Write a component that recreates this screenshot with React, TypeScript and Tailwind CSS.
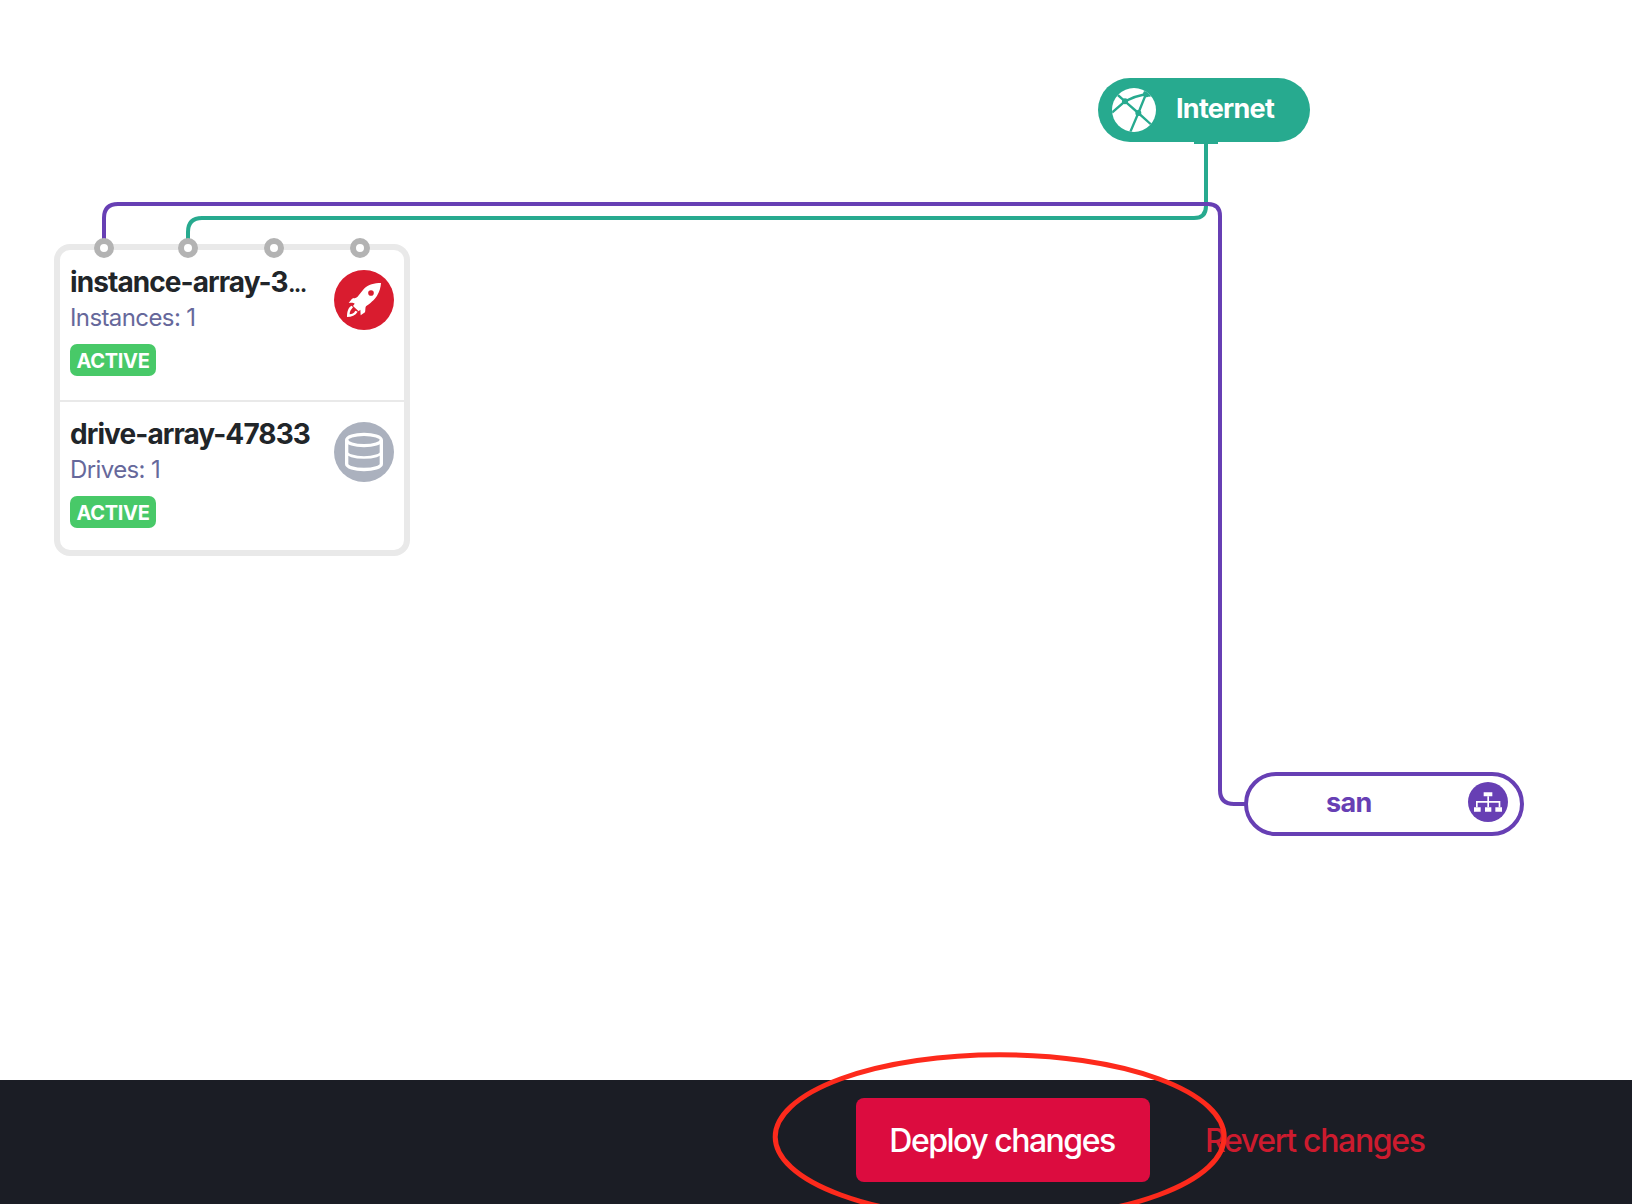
import React from "react";

const ports = ["left-[34px]", "left-[118px]", "left-[204px]", "left-[290px]"];

function RocketIcon() {
  return (
    <svg viewBox="27 30 180 180" className="size-[60px] shrink-0">
      <circle cx="117" cy="120" r="90" fill="#d91c2f" />
      <path
        d="M168 69C148 69 130 74 117 86L97 111C92 116 86 114 81 116L71 129C79 127 86 128 89 131L84 138L101 154L106 149L107 166L120 157C122 151 120 144 123 139C134 131 149 119 156 107C164 95 167 82 168 69Z"
        fill="#fff"
      />
      <circle cx="138" cy="99" r="8.5" fill="#d91c2f" />
      <path
        d="M80 137C69 143 66 155 66 171C80 171 91 166 98 155L91 152C87 160 80 162 74 163C74 155 78 149 84 142Z"
        fill="#fff"
      />
    </svg>
  );
}

function DatabaseIcon() {
  return (
    <svg viewBox="27 30 180 180" className="size-[60px] shrink-0">
      <circle cx="117" cy="120" r="90" fill="#abb1be" />
      <g fill="none" stroke="#fff" strokeWidth="10">
        <ellipse cx="117" cy="84" rx="52" ry="17" />
        <path d="M65 84V156C65 165 88 172.500 117 172.500S169 165 169 156V84" />
        <path d="M65 120C65 129 88 136.500 117 136.500S169 129 169 120" strokeWidth="8" />
      </g>
    </svg>
  );
}

function GlobeIcon() {
  return (
    <svg viewBox="96 84 132 132" className="size-[44px]">
      <defs>
        <clipPath id="globe">
          <circle cx="162" cy="150" r="66" />
        </clipPath>
      </defs>
      <circle cx="162" cy="150" r="66" fill="#fff" />
      <g clipPath="url(#globe)" stroke="#27aa8f" strokeWidth="7" fill="none">
        <path d="M110 102L135 124L175 159L215 195M96 158L135 124Q166 108 198 102L175 159L150 218M198 102L212 108" />
        <g fill="#27aa8f" stroke="none">
          <circle cx="135" cy="124" r="9" />
          <circle cx="175" cy="159" r="9" />
          <circle cx="199" cy="102" r="10" />
        </g>
      </g>
    </svg>
  );
}

function NetworkIcon() {
  return (
    <svg viewBox="54 36 120 120" className="size-[40px]">
      <circle cx="114" cy="96" r="60" fill="#673fb4" />
      <g fill="#fff">
        <path d="M101 67h26v12h-26zM72 112h20v13H72zM105 112h19v13h-19zM136 112h20v13h-20z" />
        <path d="M112 79h5v14h34v19h-5V98h-29v14h-5V98H83v14h-5V93h34z" />
      </g>
    </svg>
  );
}

function Row({
  title,
  truncated,
  detail,
  icon,
  className,
}: {
  title: string;
  truncated?: boolean;
  detail: string;
  icon: React.ReactNode;
  className: string;
}) {
  return (
    <div className={`flex items-start justify-between px-[10px] ${className}`}>
      <div className="flex flex-col items-start">
        <h2 className="-mt-[6px] whitespace-nowrap text-[28px] leading-[37px] font-bold tracking-[-0.92px] text-[#212529]">
          {title}
          {truncated && <span className="font-normal tracking-[-2.2px]">...</span>}
        </h2>
        <p className="mt-px text-[24px] leading-[32px] tracking-[-0.6px] text-[#66689b]">{detail}</p>
        <span className="mt-[10px] flex h-8 w-[86px] items-center justify-center rounded-[7px] bg-[#48c968] pt-[2px] text-[20px] font-bold tracking-[-0.3px] text-white">
          ACTIVE
        </span>
      </div>
      {icon}
    </div>
  );
}

export default function App() {
  return (
    <div className="relative flex h-[1204px] w-[1632px] flex-col overflow-hidden bg-white font-['Inter','Liberation_Sans',sans-serif]">
      <main className="relative flex-1">
        <svg className="absolute inset-0 h-full w-full" viewBox="0 0 1632 1080" fill="none" strokeWidth="4">
          <path d="M188 244V232Q188 218 202 218H1194Q1206 218 1206 206V142" stroke="#27aa8f" />
          <path d="M1194 143H1218" stroke="#27aa8f" strokeWidth="2" />
          <path d="M104 244V218Q104 204 118 204H1208Q1220 204 1220 216V790Q1220 804 1234 804H1248" stroke="#673fb4" />
        </svg>

        <section className="absolute top-[244px] left-[54px] h-[312px] w-[356px] rounded-[16px] border-[6px] border-[#e9e9e9] bg-white">
          <Row title="instance-array-3" truncated detail="Instances: 1" icon={<RocketIcon />} className="h-[150px] pt-5" />
          <Row
            title="drive-array-47833"
            detail="Drives: 1"
            icon={<DatabaseIcon />}
            className="h-[150px] border-t-2 border-[#e9e9e9] pt-5"
          />
          {ports.map((left) => (
            <span key={left} className={`absolute -top-[12px] size-5 rounded-full border-[6px] border-[#b3b3b3] bg-white ${left}`} />
          ))}
        </section>

        <div className="absolute top-[78px] left-[1098px] flex h-16 w-[212px] items-center rounded-full bg-[#27aa8f] pl-[14px]">
          <GlobeIcon />
          <span className="-mt-px ml-5 text-[27px] font-bold tracking-[-0.75px] text-white">Internet</span>
        </div>

        <div className="absolute top-[772px] left-[1244px] flex h-16 w-[280px] items-center justify-between rounded-full border-4 border-[#673fb4] bg-white pr-3 pb-1 pl-[78px]">
          <span className="pt-[2px] text-[27px] font-bold tracking-[-0.7px] text-[#673fb4]">san</span>
          <NetworkIcon />
        </div>
      </main>

      <footer className="flex h-[124px] items-start bg-[#1b1d25] pt-[18px] pl-[856px] text-[32px] font-medium">
        <button className="h-[84px] w-[294px] rounded-[8px] bg-[#dc0c3f] pt-[2px] pr-[2px] tracking-[-1.5px] text-white">Deploy changes</button>
        <button className="ml-[55px] h-[84px] pt-[2px] tracking-[-1.34px] whitespace-nowrap text-[#cd1b2e]">Revert changes</button>
      </footer>

      <svg className="pointer-events-none absolute inset-0 h-full w-full" viewBox="0 0 1632 1204">
        <ellipse cx="999.700" cy="1136.900" rx="224.500" ry="82.200" fill="none" stroke="#fd2a1c" strokeWidth="5" />
      </svg>
    </div>
  );
}
